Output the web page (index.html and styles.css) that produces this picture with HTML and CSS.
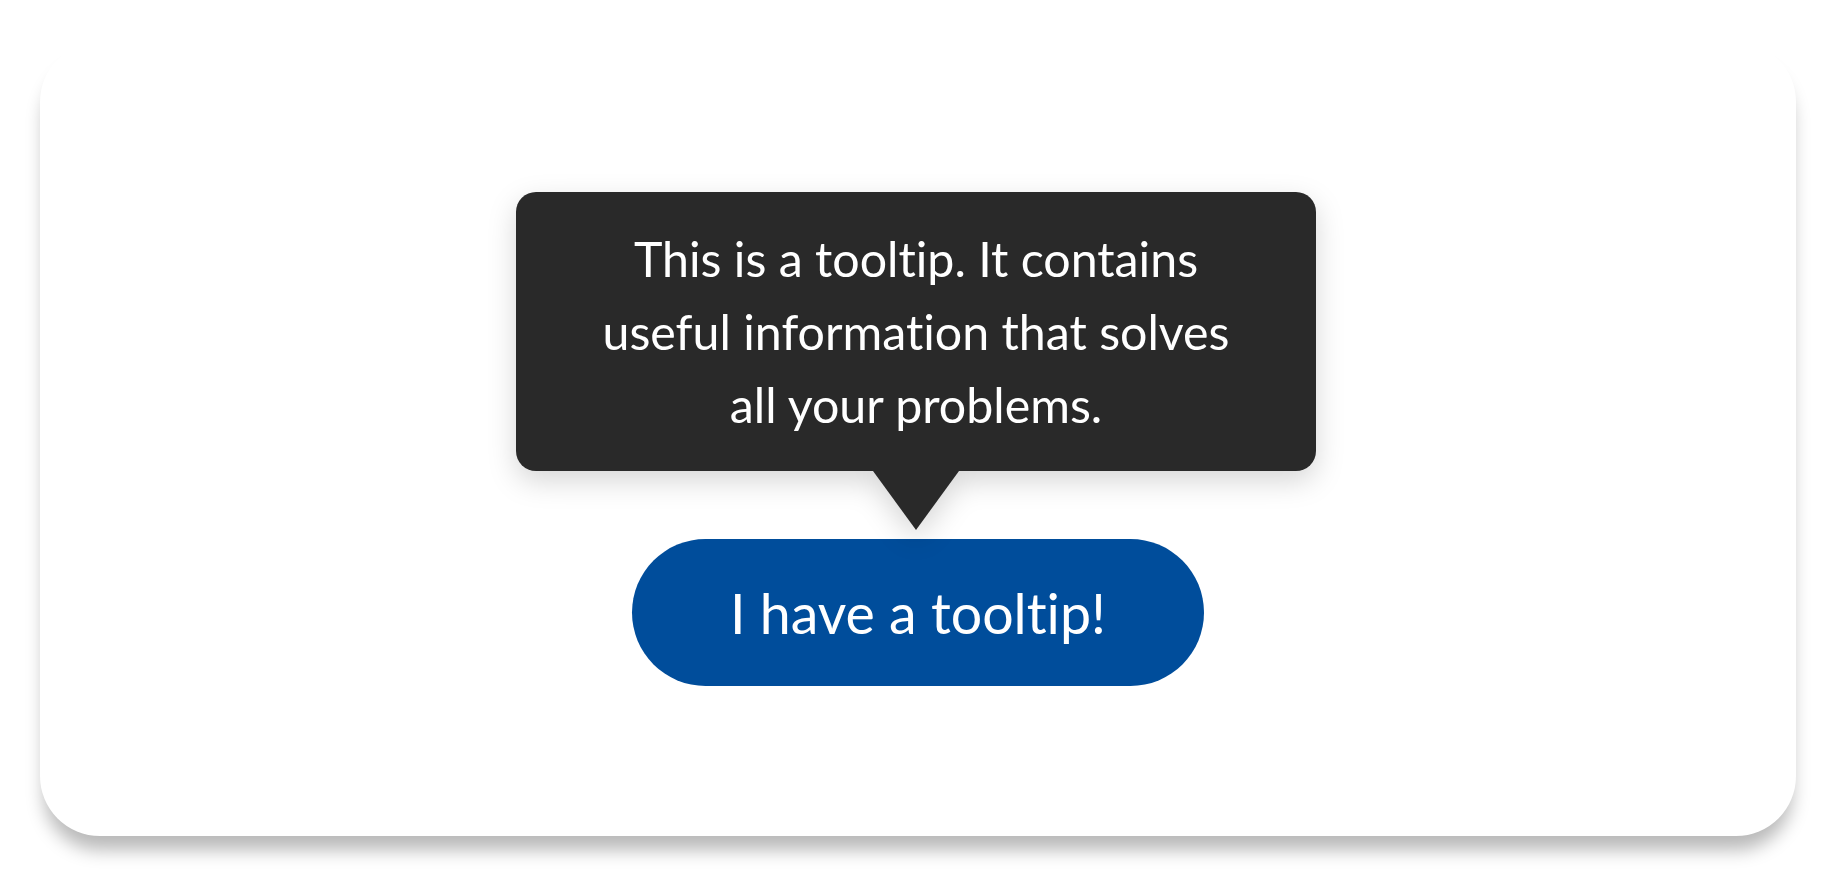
FILE: index.html
```html
<!DOCTYPE html>
<html lang="en">
<head>
<meta charset="utf-8">
<title>Tooltip</title>
<link rel="stylesheet" href="styles.css">
</head>
<body>
<main class="card">
  <div class="demo">
    <div class="tooltip" role="tooltip">
      This is a tooltip. It contains<br>
      useful information that solves<br>
      all your problems.
    </div>
    <button class="btn" type="button">I have a tooltip!</button>
  </div>
</main>
</body>
</html>
```
FILE: styles.css
```css
html, body {
  margin: 0;
  padding: 0;
  background: #ffffff;
}
body {
  width: 1832px;
  height: 880px;
  box-sizing: border-box;
  padding: 42px 36px 44px 40px;
  font-family: Lato, "Open Sans", "Liberation Sans", sans-serif;
  font-variant-ligatures: none;
}
.card {
  height: 100%;
  background: #ffffff;
  border-radius: 60px;
  box-shadow: 0 18px 18px -4px rgba(0, 0, 0, 0.28);
  display: flex;
  align-items: center;
  justify-content: center;
}
.demo {
  display: flex;
  flex-direction: column;
  align-items: center;
}
.tooltip {
  position: relative;
  width: 800px;
  box-sizing: border-box;
  padding: 30px 20px;
  background: #292929;
  color: #ffffff;
  border-radius: 20px;
  font-size: 48.3px;
  line-height: 73px;
  text-align: center;
  margin-left: -4px;
  filter: drop-shadow(0 10px 14px rgba(0, 0, 0, 0.16));
}
.tooltip::after {
  content: "";
  position: absolute;
  left: 50%;
  top: 100%;
  margin-left: -43px;
  width: 86px;
  height: 59px;
  background: #292929;
  clip-path: polygon(0 0, 100% 0, 50% 100%);
}
.btn {
  margin-top: 68px;
  width: 572px;
  height: 147px;
  border: none;
  border-radius: 74px;
  background: #004d9b;
  color: #ffffff;
  font-family: inherit;
  font-variant-ligatures: none;
  font-size: 55.5px;
  padding: 0;
}
```
